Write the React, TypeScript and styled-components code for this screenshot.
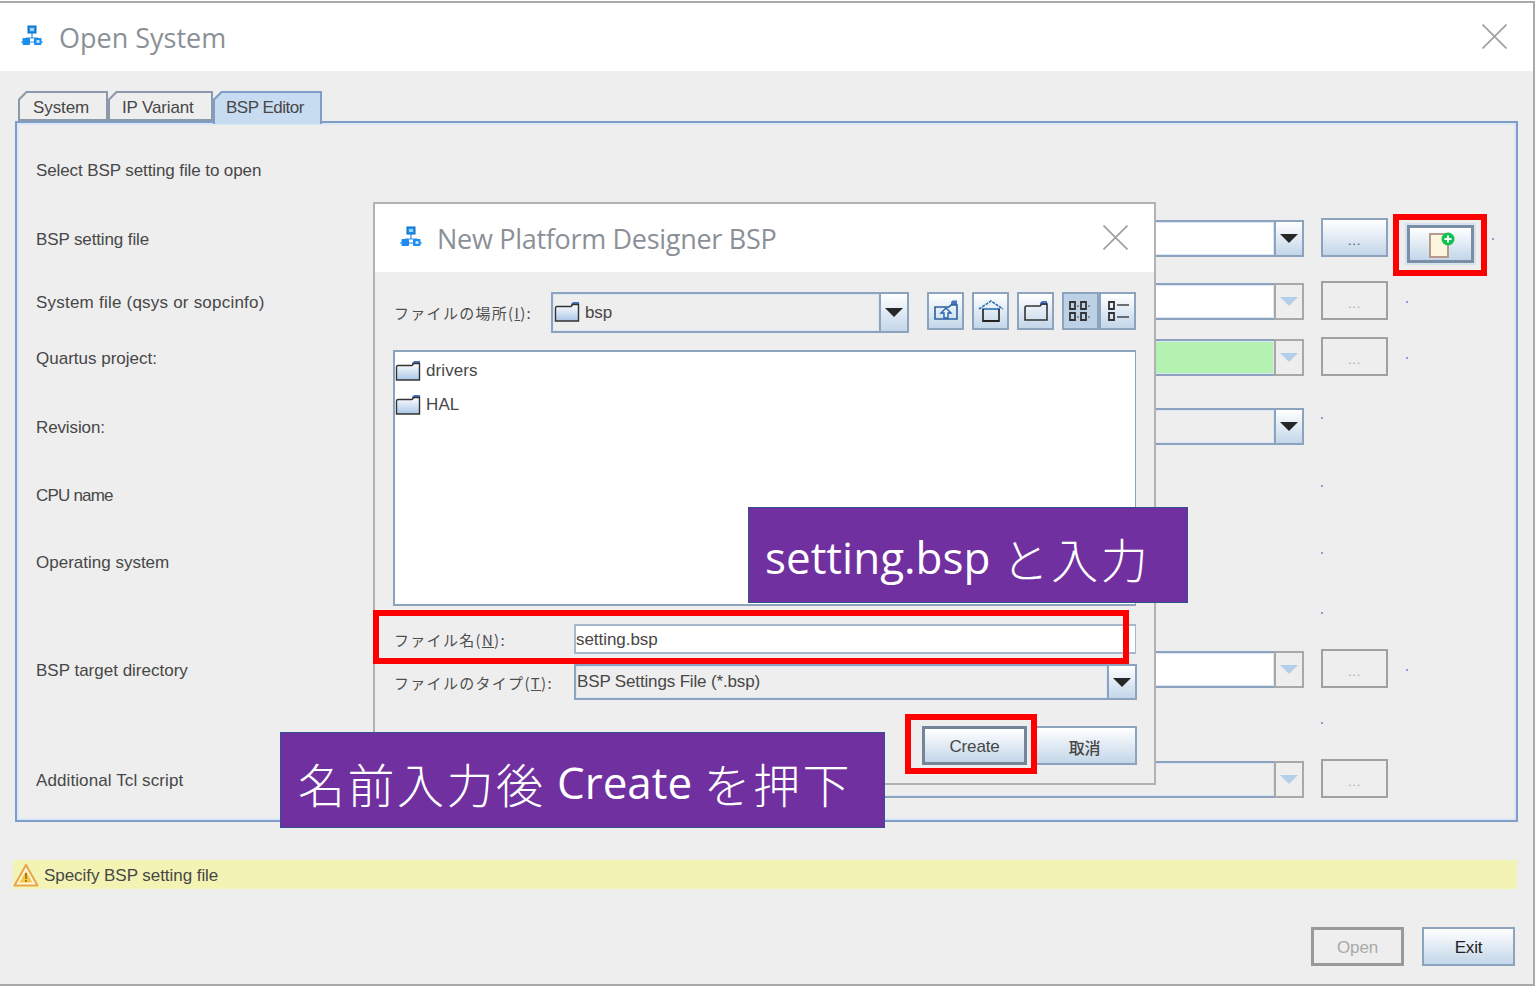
import styled, { createGlobalStyle } from "styled-components";

const GlobalStyle = createGlobalStyle`
  html, body {
    margin: 0;
    padding: 0;
    background: #fff;
  }
  body {
    font-family: "Liberation Sans", "Noto Sans CJK JP", sans-serif;
    color: #474747;
  }
`;

const Page = styled.div`
  position: relative;
  width: 1537px;
  height: 987px;
  overflow: hidden;
  padding-top: 1px;
  box-sizing: border-box;
`;

const Window = styled.div`
  width: 1535px;
  height: 985px;
  box-sizing: border-box;
  border-top: 2px solid #a9a9a9;
  border-right: 2px solid #a9a9a9;
  border-bottom: 2px solid #a9a9a9;
  background: #eeeeee;
  display: flex;
  flex-direction: column;
`;

const TitleBar = styled.div`
  height: 68px;
  flex: none;
  background: #fff;
  display: flex;
  align-items: center;
  padding-left: 20px;
  gap: 15px;
  position: relative;
`;

const DialogTitleBar = styled(TitleBar)`
  padding-left: 24px;
  gap: 14px;
`;

const TitleText = styled.div<{ $track?: number }>`
  font-family: "Open Sans", sans-serif;
  font-size: 27px;
  letter-spacing: ${(p) => p.$track ?? 0}px;
  color: #8b9097;
  line-height: 1;
`;

const CloseSlot = styled.div`
  position: absolute;
  right: 26px;
  top: 21px;
`;

const TabBar = styled.div`
  display: flex;
  margin: 20px 0 -3px 18px;
  height: 33px;
  position: relative;
  z-index: 1;
`;

const Tab = styled.div<{ $active?: boolean; $w: number }>`
  position: relative;
  width: ${(p) => p.$w}px;
  height: ${(p) => (p.$active ? 33 : 30)}px;
  background: ${(p) => (p.$active ? "#7f9dc8" : "#8b99a8")};
  clip-path: polygon(8px 0, 100% 0, 100% 100%, 0 100%, 0 8px);
  font-size: 17px;
  color: #474747;
  &::before {
    content: "";
    position: absolute;
    inset: 2px 2px ${(p) => (p.$active ? 0 : 2)}px 2px;
    background: ${(p) => (p.$active ? "#c8dcf1" : "#eeeeee")};
    clip-path: polygon(7px 0, 100% 0, 100% 100%, 0 100%, 0 7px);
  }
`;

const TabText = styled.span<{ $track: number; $left: number }>`
  position: absolute;
  top: 7px;
  left: ${(p) => p.$left}px;
  letter-spacing: ${(p) => p.$track}px;
  white-space: nowrap;
`;

const Panel = styled.div`
  margin-left: 15px;
  width: 1503px;
  height: 701px;
  flex: none;
  box-sizing: border-box;
  border: 2px solid #7f9dc8;
  box-shadow: inset 0 0 0 2px #dbe7f4;
  padding: 17px 0 0 19px;
`;

const Row = styled.div<{ $h: number; $pad?: number }>`
  height: ${(p) => p.$h}px;
  box-sizing: border-box;
  padding-top: ${(p) => p.$pad ?? 0}px;
  display: grid;
  grid-template-columns: 364px 904px 1fr;
  align-items: center;
`;

const Label = styled.div<{ $track?: number }>`
  font-size: 17px;
  letter-spacing: ${(p) => p.$track ?? -0.12}px;
  margin-top: 2px;
  white-space: nowrap;
  color: #474747;
`;

const Combo = styled.div`
  height: 37px;
  display: flex;
`;

const RowCombo = styled(Combo)`
  grid-column: 2;
  margin-bottom: 2px;
`;

const ComboField = styled.div<{ $bg?: string; $pad?: number }>`
  flex: 1;
  display: flex;
  align-items: center;
  gap: 5px;
  padding-left: ${(p) => p.$pad ?? 2}px;
  min-width: 0;
  box-sizing: border-box;
  background: ${(p) => p.$bg ?? "#fff"};
  border: 2px solid #8ba3bd;
  border-right: 0;
  box-shadow: inset 0 0 0 1px #dbe7f4;
  font-size: 17px;
  letter-spacing: -0.15px;
`;

const ComboArrow = styled.div<{ $off?: boolean }>`
  width: 30px;
  flex: none;
  box-sizing: border-box;
  border: 2px solid ${(p) => (p.$off ? "#a8a8a8" : "#8ba3bd")};
  background: ${(p) => (p.$off ? "#eeeeee" : "linear-gradient(#ffffff, #c3d6e9)")};
  display: flex;
  align-items: center;
  justify-content: center;
  &::after {
    content: "";
    border-left: 9px solid transparent;
    border-right: 9px solid transparent;
    border-top: 9px solid ${(p) => (p.$off ? "#b6cfe8" : "#272727")};
  }
`;

const Actions = styled.div`
  grid-column: 3;
  display: flex;
  align-items: center;
  gap: 18px;
  padding-left: 17px;
`;

const Button = styled.div<{ $off?: boolean; $focus?: boolean; $w?: number }>`
  width: ${(p) => p.$w ?? 67}px;
  height: 39px;
  flex: none;
  box-sizing: border-box;
  padding-top: 2px;
  border: ${(p) => (p.$focus ? 3 : 2)}px solid
    ${(p) => (p.$off ? "#a0a0a0" : p.$focus ? "#74859a" : "#8ba3bd")};
  background: ${(p) => (p.$off ? "#eeeeee" : "linear-gradient(#ffffff, #c3d6e9)")};
  color: ${(p) => (p.$off ? "#a9a9a9" : "#474747")};
  font-size: 17px;
  letter-spacing: -0.15px;
  display: flex;
  align-items: center;
  justify-content: center;
`;

const BrowseButton = styled(Button)`
  font-size: 13px;
  letter-spacing: 0.8px;
  padding-top: 5px;
  margin-bottom: 3px;
`;

const NewButton = styled(Button)`
  margin: 5px 0 -5px 1px;
  height: 38px;
  padding-top: 0;
  border-width: 3px;
  border-color: #7a8ea5;
  outline: 2px solid #d6e2ee;
`;

const Dot = styled.span<{ $raise?: number }>`
  width: 2px;
  height: 2px;
  background: #8aa0d0;
  flex: none;
  margin-bottom: ${(p) => p.$raise ?? 0}px;
`;

const StatusBar = styled.div`
  margin: 38px 0 0 13px;
  width: 1504px;
  height: 29px;
  flex: none;
  background: #f3f3b3;
  display: flex;
  align-items: center;
  font-size: 17px;
  letter-spacing: -0.05px;
  color: #474747;
  gap: 5px;
`;

const StatusText = styled.span`
  padding-top: 2px;
`;

const Footer = styled.div`
  margin-top: 38px;
  padding-left: 1311px;
  display: flex;
  gap: 18px;
`;

const OpenButton = styled(Button)`
  width: 93px;
  border-width: 3px;
  border-color: #9a9a9a;
`;

const ExitButton = styled(Button)`
  width: 93px;
  color: #222;
`;

const Dialog = styled.div`
  position: absolute;
  left: 373px;
  top: 202px;
  width: 783px;
  height: 583px;
  box-sizing: border-box;
  border: 2px solid #b2b2b2;
  background: #eeeeee;
`;

const LocationRow = styled.div`
  display: flex;
  align-items: center;
  margin-top: 20px;
  padding-left: 19px;
  height: 40px;
`;

const JpLabel = styled.div<{ $w: number }>`
  width: ${(p) => p.$w}px;
  flex: none;
  font-family: "Noto Sans CJK JP", sans-serif;
  font-size: 15px;
  letter-spacing: 1.3px;
  white-space: nowrap;
  color: #4f4f4f;
`;

const LocationCombo = styled(Combo)`
  width: 358px;
  height: 41px;
  flex: none;
`;

const Toolbar = styled.div`
  display: flex;
  gap: 8px;
  margin: 0 0 2px 18px;
`;

const ToolButton = styled.div<{ $on?: boolean }>`
  width: 37px;
  height: 38px;
  box-sizing: border-box;
  border: 2px solid #8ba3bd;
  background: ${(p) => (p.$on ? "#bcd0e6" : "linear-gradient(#ffffff, #c3d6e9)")};
  display: flex;
  align-items: center;
  justify-content: center;
`;

const ToolGroup = styled.div`
  display: flex;
`;

const FileList = styled.div`
  margin: 18px 0 0 18px;
  width: 743px;
  height: 256px;
  box-sizing: border-box;
  background: #fff;
  border: 2px solid #8ba3bd;
  border-right-width: 1px;
  padding-top: 2px;
`;

const FileItem = styled.div`
  height: 34px;
  display: flex;
  align-items: center;
  gap: 5px;
  font-size: 17px;
  letter-spacing: 0.1px;
  color: #474747;
`;

const FieldRow = styled.div<{ $top: number }>`
  display: flex;
  align-items: center;
  margin-top: ${(p) => p.$top}px;
  padding-left: 19px;
`;

const NameInput = styled.div`
  width: 562px;
  height: 30px;
  box-sizing: border-box;
  background: #fff;
  border: 2px solid #a6b8cb;
  border-right-width: 1px;
  font-size: 17px;
  letter-spacing: -0.05px;
  padding: 2px 0 0 0;
  display: flex;
  align-items: center;
  color: #474747;
`;

const TypeCombo = styled(Combo)`
  width: 563px;
  height: 36px;
`;

const DialogButtons = styled.div`
  display: flex;
  justify-content: flex-end;
  gap: 5px;
  margin-top: 26px;
  padding-right: 17px;
`;

const CancelText = styled.span`
  font-family: "Noto Sans CJK JP", sans-serif;
  font-size: 16px;
  font-weight: 500;
`;

const Callout = styled.div<{ $x: number; $y: number; $w: number; $pad: number }>`
  position: absolute;
  left: ${(p) => p.$x}px;
  top: ${(p) => p.$y}px;
  width: ${(p) => p.$w}px;
  height: 96px;
  box-sizing: border-box;
  background: #7030a0;
  border: 1px solid #2f528f;
  padding: 4px 0 0 ${(p) => p.$pad}px;
  display: flex;
  align-items: center;
  color: #fff;
  font-family: "Open Sans", "Noto Sans CJK JP", sans-serif;
  font-size: 44px;
  white-space: pre;
`;

const CalloutJp = styled.span`
  font-family: "Noto Sans CJK JP", sans-serif;
  font-size: 47px;
  font-weight: 300;
  letter-spacing: 2.5px;
`;

const RedBox = styled.div<{ $x: number; $y: number; $w: number; $h: number }>`
  position: absolute;
  left: ${(p) => p.$x}px;
  top: ${(p) => p.$y}px;
  width: ${(p) => p.$w}px;
  height: ${(p) => p.$h}px;
  box-sizing: border-box;
  border: 6px solid #ff0000;
`;

const NetworkIcon = () => (
  <svg width="24" height="24" viewBox="0 0 24 24">
    <rect x="8" y="1" width="8" height="7" fill="#1f8fe8" stroke="#0a6cc4" />
    <rect x="10" y="3" width="4" height="3" fill="#9fd4fa" />
    <path d="M12 8v5M6 13h12M1 17h2M21 17h2M10 17h4" stroke="#2a8be0" strokeWidth="1.2" fill="none" />
    <rect x="2.5" y="13" width="7.5" height="7" rx="1" fill="#1b8df0" />
    <rect x="14" y="13" width="7.5" height="7" rx="1" fill="#1b8df0" />
    <rect x="16.5" y="15" width="3" height="3" fill="#bfe2fb" />
  </svg>
);

const Folder = ({ id }: { id: string }) => (
  <svg width="26" height="22" viewBox="0 0 26 22">
    <defs>
      <linearGradient id={id} x1="0" y1="0" x2="0" y2="1">
        <stop offset="0" stopColor="#ffffff" />
        <stop offset="1" stopColor="#a9c6e6" />
      </linearGradient>
    </defs>
    <path d="M17 3l2-2h6v4h-8z" fill="#4a72c0" />
    <path d="M1.5 7.5c0-1 .5-2 1.5-2h14l2-2h5.5v16.5H1.5z" fill={`url(#${id})`} stroke="#333" strokeWidth="1.4" />
  </svg>
);

const ToolIcon = ({ children }: { children: React.ReactNode }) => (
  <svg width="26" height="24" viewBox="0 0 26 24" fill="none">
    {children}
  </svg>
);

const CloseGlyph = () => (
  <svg width="25" height="25" viewBox="0 0 24 24">
    <path d="M0.5 0.5L23.5 23.5M23.5 0.5L0.5 23.5" stroke="#a0a0a0" strokeWidth="1.6" fill="none" />
  </svg>
);

const Warning = () => (
  <svg width="26" height="26" viewBox="0 0 26 26">
    <path d="M13 3L24.5 23.5H1.5z" fill="#fff6d8" stroke="#e8a64a" strokeWidth="2" strokeLinejoin="round" />
    <path d="M13 9l6.5 11.5h-13z" fill="#f2c84a" />
    <rect x="12" y="11" width="2" height="6" fill="#b5761a" />
    <rect x="12" y="18" width="2" height="2" fill="#b5761a" />
  </svg>
);

const NewFile = () => (
  <svg width="32" height="28" viewBox="0 0 32 28">
    <rect x="5" y="4" width="18" height="23" fill="#fdf6df" stroke="#b8998a" strokeWidth="2" />
    <circle cx="23" cy="9" r="6.5" fill="#10c24f" />
    <path d="M23 5.5v7M19.5 9h7" stroke="#fff" strokeWidth="2" />
  </svg>
);

export default function App() {
  return (
    <Page>
      <GlobalStyle />
      <Window>
        <TitleBar>
          <NetworkIcon />
          <TitleText>Open System</TitleText>
          <CloseSlot><CloseGlyph /></CloseSlot>
        </TitleBar>
        <TabBar>
          <Tab $w={90}><TabText $left={15} $track={-0.1}>System</TabText></Tab>
          <Tab $w={105}><TabText $left={14} $track={-0.15}>IP Variant</TabText></Tab>
          <Tab $w={109} $active><TabText $left={13} $track={-0.5}>BSP Editor</TabText></Tab>
        </TabBar>
        <Panel>
          <Row $h={60}>
            <Label $track={-0.1}>Select BSP setting file to open</Label>
          </Row>
          <Row $h={78}>
            <Label>BSP setting file</Label>
            <RowCombo><ComboField /><ComboArrow /></RowCombo>
            <Actions>
              <BrowseButton>...</BrowseButton>
              <NewButton><NewFile /></NewButton>
              <Dot />
            </Actions>
          </Row>
          <Row $h={48}>
            <Label $track={0.22}>System file (qsys or sopcinfo)</Label>
            <RowCombo><ComboField /><ComboArrow $off /></RowCombo>
            <Actions>
              <BrowseButton $off>...</BrowseButton>
              <Dot />
            </Actions>
          </Row>
          <Row $h={64}>
            <Label $track={0}>Quartus project:</Label>
            <RowCombo><ComboField $bg="#b3f2b0" /><ComboArrow $off /></RowCombo>
            <Actions>
              <BrowseButton $off>...</BrowseButton>
              <Dot />
            </Actions>
          </Row>
          <Row $h={74}>
            <Label>Revision:</Label>
            <RowCombo><ComboField $bg="#eeeeee" /><ComboArrow /></RowCombo>
            <Actions><Dot $raise={18} /></Actions>
          </Row>
          <Row $h={62}>
            <Label $track={-0.8}>CPU name</Label>
            <Actions><Dot $raise={18} /></Actions>
          </Row>
          <Row $h={72}>
            <Label $track={0}>Operating system</Label>
            <Actions><Dot $raise={18} /></Actions>
          </Row>
          <Row $h={30}>
            <Actions><Dot /></Actions>
          </Row>
          <Row $h={84}>
            <Label $track={0}>BSP target directory</Label>
            <RowCombo><ComboField /><ComboArrow $off /></RowCombo>
            <Actions>
              <BrowseButton $off>...</BrowseButton>
              <Dot />
            </Actions>
          </Row>
          <Row $h={22}>
            <Actions><Dot /></Actions>
          </Row>
          <Row $h={80} $pad={12}>
            <Label $track={0.1}>Additional Tcl script</Label>
            <RowCombo><ComboField $bg="#eeeeee" /><ComboArrow $off /></RowCombo>
            <Actions>
              <BrowseButton $off>...</BrowseButton>
            </Actions>
          </Row>
        </Panel>
        <StatusBar>
          <Warning />
          <StatusText>Specify BSP setting file</StatusText>
        </StatusBar>
        <Footer>
          <OpenButton $off>Open</OpenButton>
          <ExitButton>Exit</ExitButton>
        </Footer>
      </Window>

      <Dialog>
        <DialogTitleBar>
          <NetworkIcon />
          <TitleText $track={-0.3}>New Platform Designer BSP</TitleText>
          <CloseSlot><CloseGlyph /></CloseSlot>
        </DialogTitleBar>
        <LocationRow>
          <JpLabel $w={157}>ファイルの場所(<u>I</u>):</JpLabel>
          <LocationCombo>
            <ComboField $bg="#eeeeee" $pad={1}>
              <Folder id="f-bsp" />
              <StatusText>bsp</StatusText>
            </ComboField>
            <ComboArrow />
          </LocationCombo>
          <Toolbar>
            <ToolButton>
              <ToolIcon>
                <path d="M18 3l1.5-1.5H24V6h-6z" fill="#4a72c0" />
                <path d="M2 8h14l2-2h6v14H2z" stroke="#2c5f9e" strokeWidth="1.6" />
                <path d="M13 9l5 5h-3v5h-4v-5H8z" fill="#e8f1fa" stroke="#1f64b0" strokeWidth="1.4" />
              </ToolIcon>
            </ToolButton>
            <ToolButton>
              <ToolIcon>
                <path d="M1 10L13 2l12 8" stroke="#2c6fb5" strokeWidth="1.6" strokeDasharray="3 1" />
                <path d="M4 10h18" stroke="#2c6fb5" strokeWidth="1.6" />
                <path d="M5 10v12h16V10" stroke="#333" strokeWidth="1.8" />
                <path d="M5 22h16" stroke="#222" strokeWidth="2" />
              </ToolIcon>
            </ToolButton>
            <ToolButton>
              <ToolIcon>
                <path d="M17 4l2-2h5v4h-7z" fill="#4a72c0" />
                <path d="M2 9c0-1 .5-2 1.5-2H17l2-2h5v16H2z" stroke="#333" strokeWidth="1.6" />
              </ToolIcon>
            </ToolButton>
            <ToolGroup>
              <ToolButton $on>
                <ToolIcon>
                  <path d="M2 3h5v7H2zM13 3h5v7h-5zM2 14h5v7H2zM13 14h5v7h-5z" stroke="#333" strokeWidth="1.8" />
                  <path d="M9 7h2M20 7h2M9 18h2M20 18h2" stroke="#777" strokeWidth="1.4" />
                </ToolIcon>
              </ToolButton>
              <ToolButton>
                <ToolIcon>
                  <path d="M4 3h5v7H4zM4 14h5v7H4z" stroke="#333" strokeWidth="1.8" />
                  <path d="M12 6h12M12 18h12" stroke="#444" strokeWidth="1.6" />
                </ToolIcon>
              </ToolButton>
            </ToolGroup>
          </Toolbar>
        </LocationRow>
        <FileList>
          <FileItem><Folder id="f-drivers" />drivers</FileItem>
          <FileItem><Folder id="f-hal" />HAL</FileItem>
        </FileList>
        <FieldRow $top={18}>
          <JpLabel $w={180}>ファイル名(<u>N</u>):</JpLabel>
          <NameInput>setting.bsp</NameInput>
        </FieldRow>
        <FieldRow $top={10}>
          <JpLabel $w={180}>ファイルのタイプ(<u>T</u>):</JpLabel>
          <TypeCombo>
            <ComboField $bg="#eeeeee" $pad={1}>BSP Settings File (*.bsp)</ComboField>
            <ComboArrow />
          </TypeCombo>
        </FieldRow>
        <DialogButtons>
          <Button $focus $w={105}>Create</Button>
          <Button $w={105}><CancelText>取消</CancelText></Button>
        </DialogButtons>
      </Dialog>

      <Callout $x={748} $y={507} $w={440} $pad={16}>
        setting.bsp <CalloutJp>と入力</CalloutJp>
      </Callout>
      <Callout $x={280} $y={732} $w={605} $pad={17}>
        <CalloutJp>名前入力後</CalloutJp> Create <CalloutJp>を押下</CalloutJp>
      </Callout>
      <RedBox $x={1393} $y={214} $w={94} $h={62} />
      <RedBox $x={373} $y={610} $w={756} $h={54} />
      <RedBox $x={905} $y={714} $w={132} $h={60} />
    </Page>
  );
}
